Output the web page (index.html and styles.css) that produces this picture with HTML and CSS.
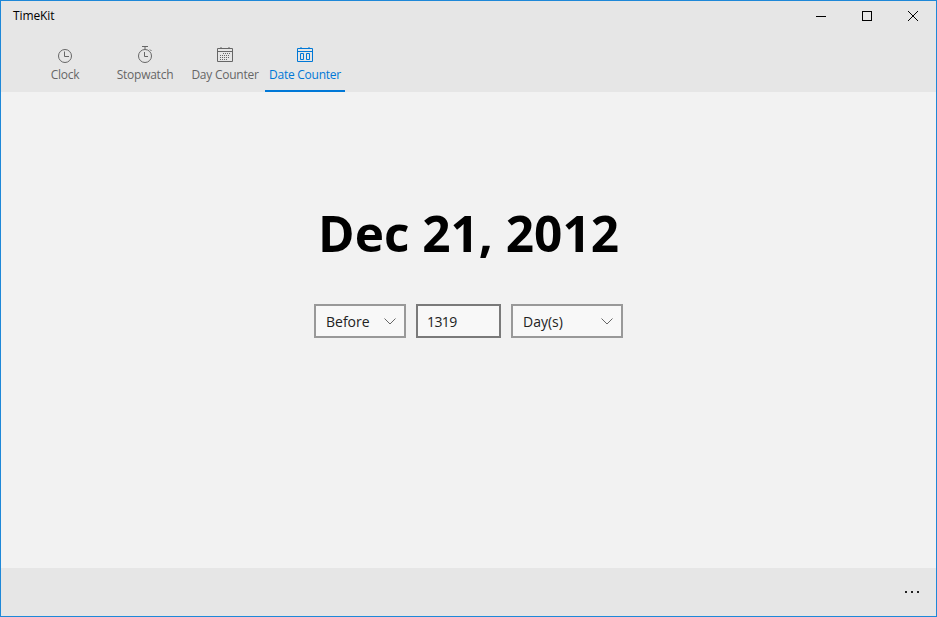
FILE: index.html
```html
<!DOCTYPE html>
<html lang="en">
<head>
<meta charset="utf-8">
<title>TimeKit</title>
<link rel="stylesheet" href="styles.css">
</head>
<body>
<div class="window">
  <header class="header">
    <div class="titlebar">
      <span class="app-title">TimeKit</span>
      <div class="caption">
        <button class="cap-btn" aria-label="Minimize"><svg width="10" height="10" viewBox="0 0 10 10"><path d="M0 5.5H10" stroke="#000" fill="none"/></svg></button>
        <button class="cap-btn" aria-label="Maximize"><svg width="10" height="10" viewBox="0 0 10 10"><rect x=".5" y=".5" width="9" height="9" stroke="#000" fill="none"/></svg></button>
        <button class="cap-btn" aria-label="Close"><svg width="10" height="10" viewBox="0 0 10 10"><path d="M0 0L10 10M10 0L0 10" stroke="#000" stroke-width="1" fill="none"/></svg></button>
      </div>
    </div>
    <nav class="tabs">
      <a class="tab">
        <svg class="tab-icon" width="16" height="16" viewBox="0 0 16 16"><circle cx="8" cy="8" r="6.500" fill="none" stroke="currentColor"/><path d="M7.500 3.500V8.500H12" fill="none" stroke="currentColor"/></svg>
        <span>Clock</span>
      </a>
      <a class="tab">
        <svg class="tab-icon" width="16" height="18" viewBox="0 0 16 18"><circle cx="8" cy="10" r="6.500" fill="none" stroke="currentColor"/><path d="M7.500 6V10.500H11M5 .5H11M8 .5V3M13 3.500L14.500 5" fill="none" stroke="currentColor"/></svg>
        <span>Stopwatch</span>
      </a>
      <a class="tab">
        <svg class="tab-icon cal-icon" width="16" height="16" viewBox="0 0 16 16"><path d="M.5 1.500H15.500V14.500H.5ZM.5 4.500H15.500M4 0V2M12 0V2" fill="none" stroke="currentColor"/><path d="M6 6.500H13M3 8.500H13M3 10.500H13M3 12.500H11" fill="none" stroke="currentColor" stroke-dasharray="1 1"/></svg>
        <span>Day Counter</span>
      </a>
      <a class="tab tab-active">
        <svg class="tab-icon cal-icon" width="16" height="16" viewBox="0 0 16 16"><path d="M.5 1.500H15.500V14.500H.5ZM.5 4.500H15.500M4 0V2M12 0V2M3.500 6.500H6.500V12.500H3.500ZM9.500 6.500H12.500V12.500H9.500Z" fill="none" stroke="currentColor"/></svg>
        <span>Date Counter</span>
      </a>
    </nav>
  </header>
  <main class="content">
    <h1 class="date">Dec 21, 2012</h1>
    <div class="controls">
      <div class="field select select-before"><span>Before</span><svg width="12" height="7" viewBox="0 0 12 7"><path d="M.5 .5L6 6L11.500 .5" fill="none" stroke="#666"/></svg></div>
      <div class="field input">1319</div>
      <div class="field select select-unit"><span>Day(s)</span><svg width="12" height="7" viewBox="0 0 12 7"><path d="M.5 .5L6 6L11.500 .5" fill="none" stroke="#666"/></svg></div>
    </div>
  </main>
  <footer class="footer"><span class="dots"><i></i><i></i><i></i></span></footer>
</div>
</body>
</html>
```
FILE: styles.css
```css
* { box-sizing: border-box; }
html, body { margin: 0; height: 100%; }
body { font-family: "Open Sans", "Noto Sans", sans-serif; overflow: hidden; }
.window {
  width: 937px; height: 617px;
  border: 1px solid #1e88d8;
  display: flex; flex-direction: column;
  background: #f2f2f2;
}
.header { background: #e6e6e6; height: 91px; flex: none; display: flex; flex-direction: column; }
.titlebar { height: 31px; display: flex; justify-content: space-between; align-items: flex-start; flex: none; }
.app-title { font-size: 12px; letter-spacing: -.1px; line-height: 16px; margin: 7px 0 0 12px; color: #000; }
.caption { display: flex; }
.cap-btn {
  width: 46px; height: 30px; border: 0; padding: 0; background: none;
  display: flex; align-items: center; justify-content: center;
}
.tabs { display: flex; padding-left: 24px; flex: 1; }
.tab {
  width: 80px; height: 60px; display: flex; flex-direction: column; align-items: center;
  color: #666; font-size: 12px; letter-spacing: -.25px; position: relative;
  justify-content: flex-end; padding-bottom: 9px;
  line-height: 16px;
}
.tab-icon { margin-bottom: 3px; flex: none; }
.cal-icon { margin-bottom: 4px; }
.tab-active { color: #0078d7; border-bottom: 2px solid #0078d7; padding-bottom: 7px; }
.content { flex: 1; display: flex; flex-direction: column; align-items: center; }
.date {
  margin: 106px 0 0; font-size: 49.500px; line-height: 70px; font-weight: 700; color: #000;
}
.controls { display: flex; gap: 10px; margin-top: 36px; }
.field {
  height: 34px; border: 2px solid #999; background: #f8f8f8;
  font-size: 14px; color: #222; display: flex; align-items: center;
}
.select { justify-content: space-between; padding: 0 8px 0 10px; }
.select-before { width: 92px; }
.select-unit { width: 112px; }
.input { width: 85px; border-color: #7a7a7a; padding-left: 9px; letter-spacing: -.6px; }
.footer {
  background: #e6e6e6; height: 48px; flex: none;
  display: flex; justify-content: flex-end; align-items: flex-start;
}
.dots { display: flex; gap: 4px; margin: 23px 17px 0 0; }
.dots i { width: 2px; height: 2px; background: #222; display: block; }
```
